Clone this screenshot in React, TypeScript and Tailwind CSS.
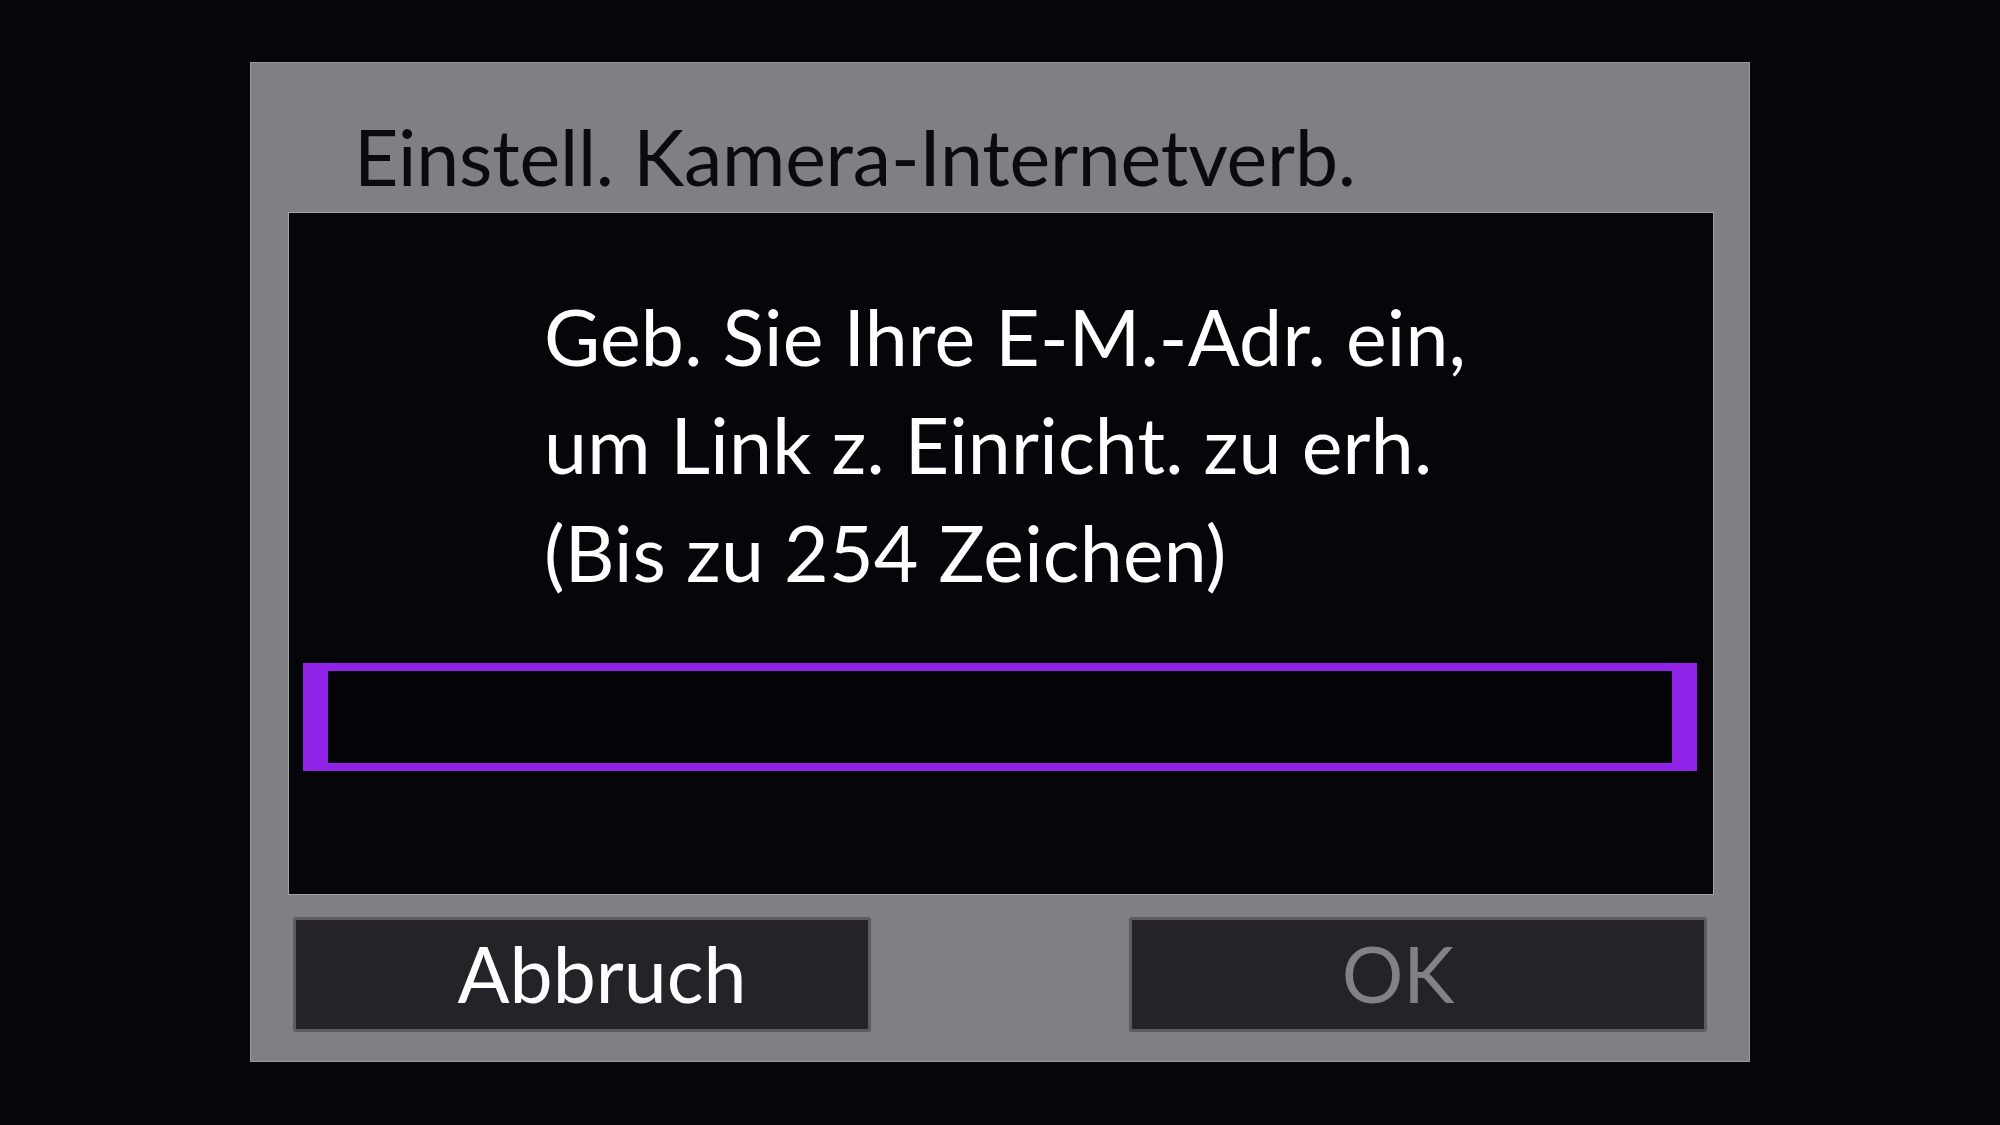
export default function App() {
  return (
    <div className="w-[2000px] h-[1125px] bg-[#06050a] flex justify-center pt-[62px] font-['Lato','Open_Sans',sans-serif]">
      <div className="w-[1500px] h-[1000px] bg-[#807f84] border border-[#98979c] flex flex-col">
        {/* title */}
        <div className="h-[149px] pl-[103px] pt-[55px]">
          <h1 className="text-[77px] leading-none text-[#0b0a0e] tracking-[-0.2px]">Einstell. Kamera-Internetverb.</h1>
        </div>

        {/* content panel */}
        <div className="mx-[37px] mr-[35px] h-[683px] bg-[#060509] border border-[#a3a2a7] flex flex-col">
          <div className="pl-[255px] pt-[69px] text-white text-[77px] leading-[108px] tracking-[0.2px]">
            <p>Geb. Sie Ihre E-M.-Adr. ein,</p>
            <p>um Link z. Einricht. zu erh.</p>
            <p>(Bis zu 254 Zeichen)</p>
          </div>
          <div className="mt-[57px] ml-[14px] mr-[16px] h-[108px] border-[#8f22e6] border-x-[25px] border-y-[8px] bg-[#050409]" />
        </div>

        {/* buttons */}
        <div className="flex justify-between px-[42px] pt-[22px]">
          <button className="w-[578px] h-[115px] bg-[#252328] border-[3px] border-[#5c5b60] rounded-[3px] text-white text-[77px] leading-none flex items-center justify-center pl-[40px] pb-[2px]">
            Abbruch
          </button>
          <button className="w-[578px] h-[115px] bg-[#252328] border-[3px] border-[#5c5b60] rounded-[3px] text-[#828187] text-[77px] leading-none flex items-center justify-center pr-[40px] pb-[2px]">
            OK
          </button>
        </div>
      </div>
    </div>
  )
}
